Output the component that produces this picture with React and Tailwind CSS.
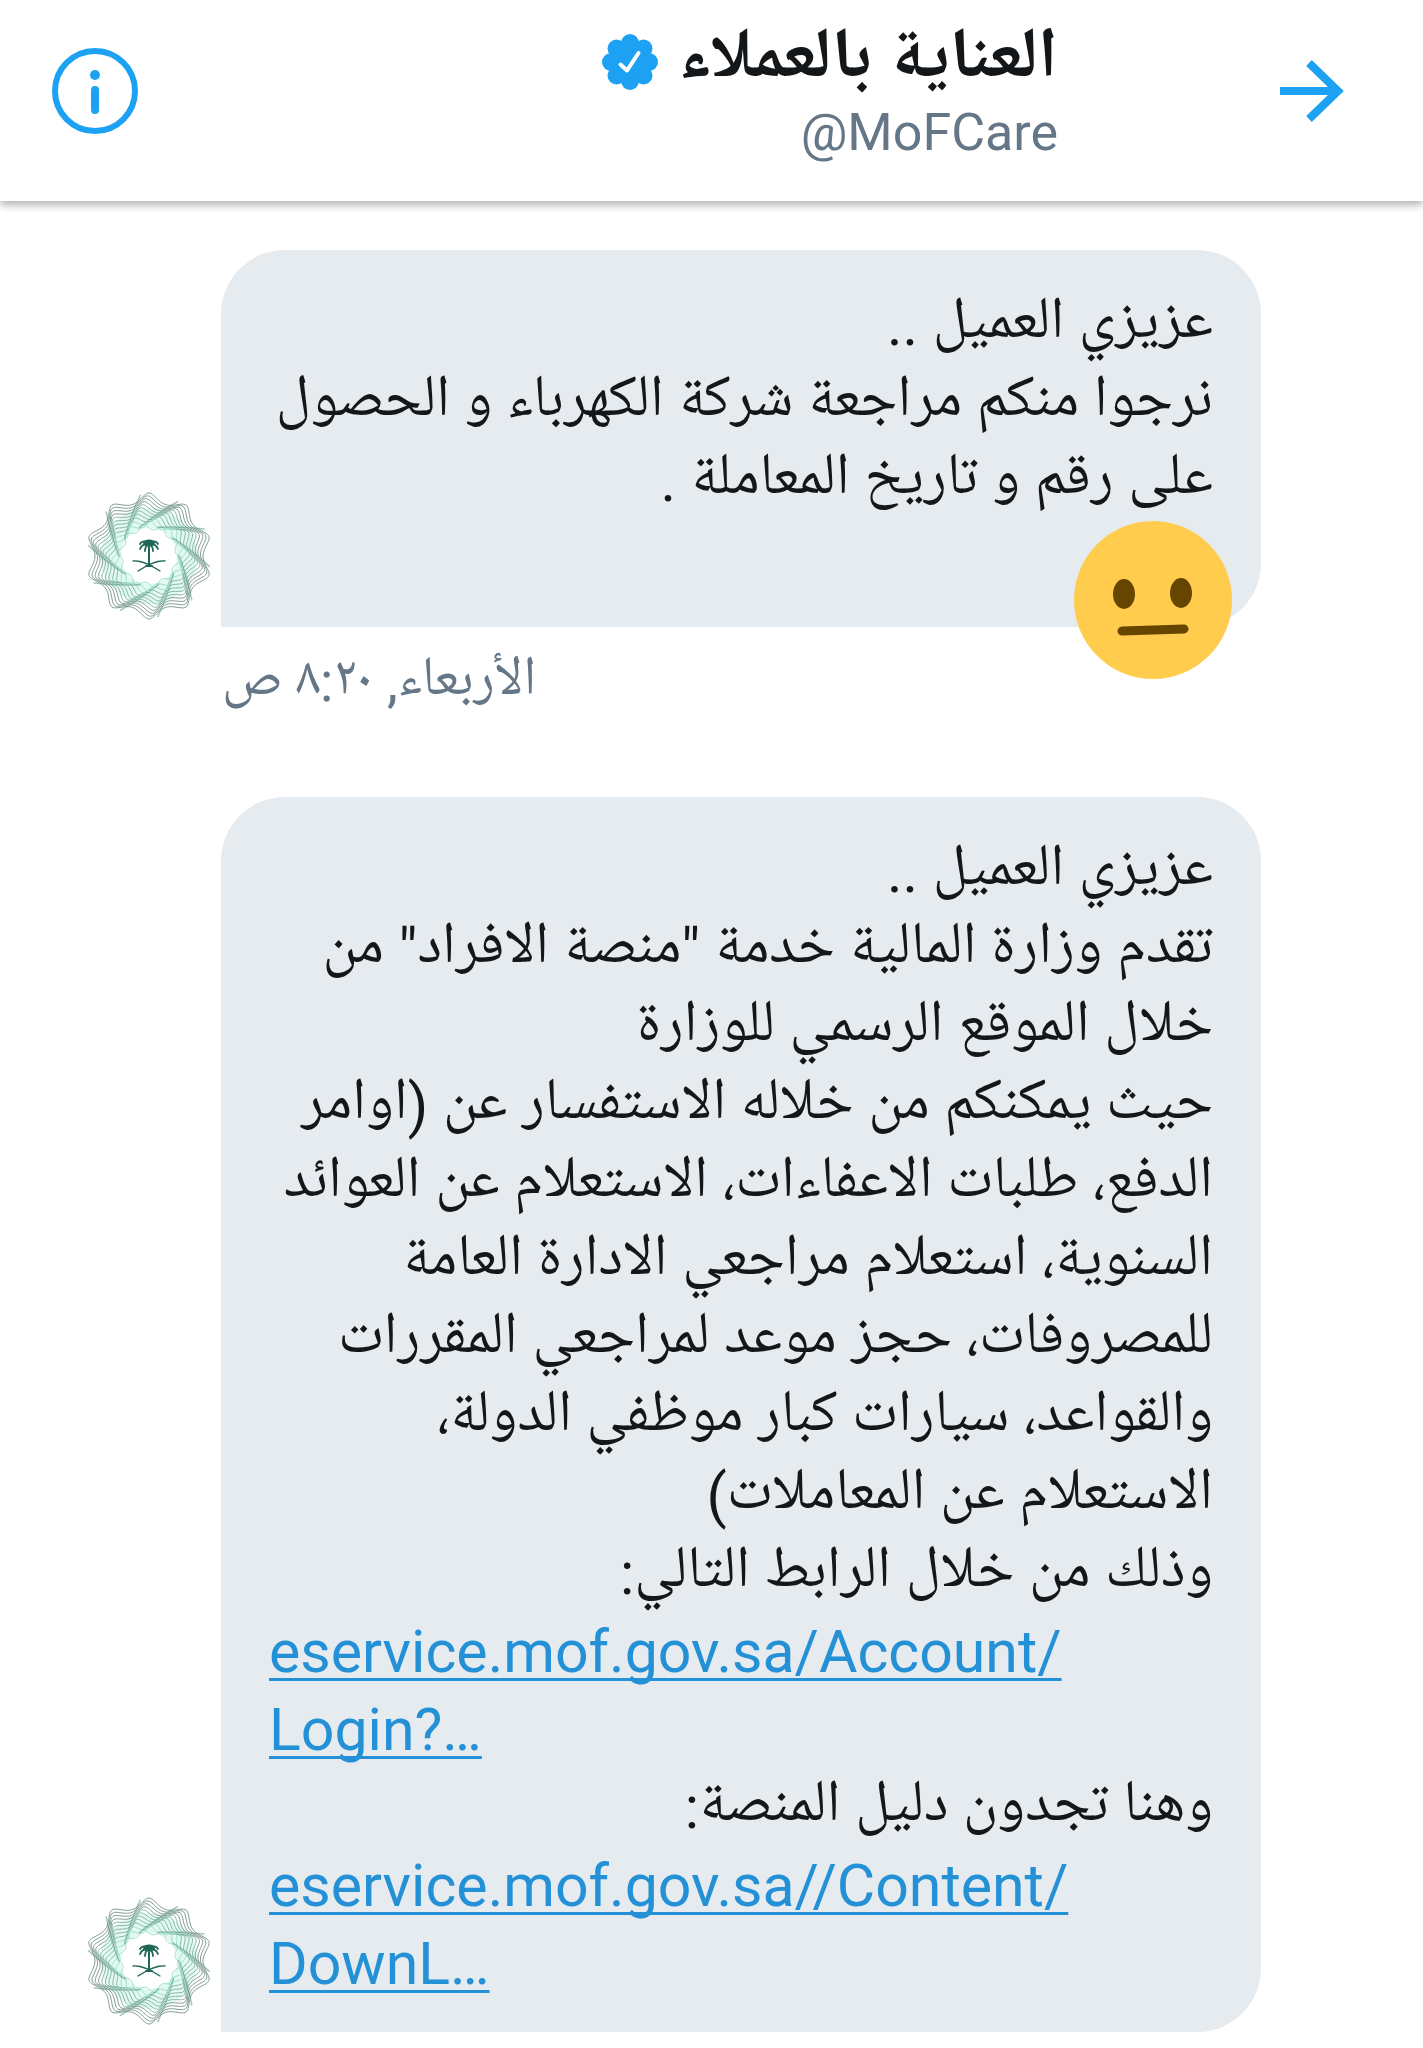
import React from 'react';

const CORE = 31;
const EDGE = 63;
const RINGS = 12;

// One ten-pointed ring of the guilloche rosette. Each smaller ring is turned a
// little further, so the points slide along lines that touch the core circle.
const ringPath = (radius) => {
  const turn = Math.acos(CORE / EDGE) - Math.acos(CORE / radius);
  const depth = 1 + 3.5 * (radius / EDGE);
  const points = [];
  for (let i = 0; i < 240; i += 1) {
    const t = (i / 240) * Math.PI * 2;
    const a = t - 0.03 * Math.sin(10 * t) - turn;
    const r = radius - depth + depth * Math.cos(10 * t);
    points.push(`${(r * Math.sin(a)).toFixed(2)} ${(-r * Math.cos(a)).toFixed(2)}`);
  }
  return `M${points.join('L')}Z`;
};

const rings = Array.from({ length: RINGS }, (_, i) =>
  ringPath(EDGE - (i * (EDGE - CORE - 1)) / (RINGS - 1))
);

const rays = [2, 38, 74, 110, 146, 182, 218, 254, 290, 326];

const Avatar = () => (
  <svg viewBox="-64 -64 128 128" className="w-32 h-32 shrink-0 mb-[7px]" role="img" aria-label="MoFCare">
    <circle r="38" fill="none" stroke="#e2f9f0" strokeWidth="20" />
    <g fill="none" strokeLinejoin="round" strokeWidth="1">
      {rings.map((d, i) => (
        <path key={d} d={d} stroke={i < 4 ? '#7f9a91' : i < 9 ? '#84b5a4' : '#9adfc8'} />
      ))}
    </g>
    <g fill="none" stroke="#4f8f7b" strokeWidth="1.5" strokeOpacity="0.5" strokeLinecap="round">
      {rays.map((angle) => (
        <path key={angle} d="M8 -29Q32 -31 54 -29" transform={`rotate(${angle})`} />
      ))}
    </g>
    <circle r="25" fill="#fff" />
    <g fill="none" stroke="#1f6655" strokeLinecap="round">
      <path d="M0 -9V9" strokeWidth="2" />
      <path d="M-1 -13C-5 -16 -8 -14 -9 -12M1 -13C5 -16 8 -14 9 -12M-1 -12C-5 -12 -8 -10 -9 -7M1 -12C5 -12 8 -10 9 -7M-1 -11C-3 -10 -4 -7 -4 -5M1 -11C3 -10 4 -7 4 -5" strokeWidth="1.8" />
      <path d="M-16 5C-8 4 0 8 11 15M16 5C8 4 0 8 -11 15" strokeWidth="1.3" />
      <path d="M-3 10H3" strokeWidth="2" />
    </g>
    <ellipse cy="-13" rx="6" ry="3.5" fill="#1f6655" />
  </svg>
);

const VerifiedBadge = () => (
  <svg viewBox="0 0 56 56" className="w-14 h-14 shrink-0" role="img" aria-label="Verified">
    <g fill="#1da1f2">
      <circle cx="28" cy="28" r="22" />
      <circle cx="28" cy="9" r="9" />
      <circle cx="41.5" cy="14.5" r="9" />
      <circle cx="47" cy="28" r="9" />
      <circle cx="41.5" cy="41.5" r="9" />
      <circle cx="28" cy="47" r="9" />
      <circle cx="14.5" cy="41.5" r="9" />
      <circle cx="9" cy="28" r="9" />
      <circle cx="14.5" cy="14.5" r="9" />
    </g>
    <path d="M18.5 30.5L25 36.5L36.5 19" fill="none" stroke="#fff" strokeWidth="4" strokeLinecap="round" strokeLinejoin="round" />
  </svg>
);

const NeutralFace = () => (
  <svg viewBox="0 0 158 158" className="w-[158px] h-[158px]" role="img" aria-label="Neutral face">
    <circle cx="79" cy="79" r="79" fill="#ffcc4d" />
    <g fill="#664500">
      <ellipse cx="50" cy="73" rx="11" ry="15" />
      <ellipse cx="107" cy="72" rx="11" ry="15" />
    </g>
    <path d="M48 110L110 108" stroke="#664500" strokeWidth="9" strokeLinecap="round" />
  </svg>
);

const Header = () => (
  <header className="flex items-start bg-white pr-[79px] pl-[52px] h-[201px] shadow-[0_4px_8px_rgba(0,0,0,0.3)]">
    <button type="button" aria-label="Back" className="mt-[60px]">
      <svg viewBox="0 0 64 64" className="w-16 h-16" fill="none" stroke="#1da1f2" strokeWidth="8">
        <path d="M0 31H58M29 3L58 31L29 59" />
      </svg>
    </button>
    <div className="flex-1 pr-[222px] pt-5">
      <div className="flex items-center gap-5">
        <h1 className="font-bold text-[71px] leading-[84px] text-[#14171a]">العناية بالعملاء</h1>
        <VerifiedBadge />
      </div>
      <p dir="ltr" className="text-right text-[52px] leading-[58px] text-[#657786]">@MoFCare</p>
    </div>
    <button type="button" aria-label="Conversation info" className="mt-12">
      <svg viewBox="0 0 86 86" className="w-[86px] h-[86px]">
        <circle cx="43" cy="43" r="40" fill="none" stroke="#1da1f2" strokeWidth="6" />
        <circle cx="43" cy="27" r="5" fill="#1da1f2" />
        <path d="M43 42V62" stroke="#1da1f2" strokeWidth="8" strokeLinecap="round" />
      </svg>
    </button>
  </header>
);

const MessageLink = ({ href, children }) => (
  <a
    dir="ltr"
    href={href}
    className="block text-left text-[#2490d6] underline decoration-[3px] underline-offset-[6px] [text-decoration-skip-ink:none]"
  >
    {children}
  </a>
);

const Message = ({ children, reaction }) => (
  <div className="flex items-end flex-row-reverse gap-2 pl-[85px] pr-[162px]">
    <Avatar />
    <div className="relative flex-1 rounded-[64px] rounded-bl-none bg-[#e6ebf0] px-12 pt-9 pb-[29px] text-[59px] leading-[78px] text-[#14171a]">
      {children}
      {reaction && <div className="absolute right-[29px] -bottom-[52px]">{reaction}</div>}
    </div>
  </div>
);

const App = () => {
  return (
    <div dir="rtl" className="min-h-screen bg-white pb-3 font-['Roboto','Noto_Naskh_Arabic_UI','Noto_Naskh_Arabic','Noto_Sans_Arabic','DejaVu_Sans',sans-serif]">
      <Header />
      <main className="pt-[49px]">
        <Message reaction={<NeutralFace />}>
          <p>عزيزي العميل ..</p>
          <p>
            نرجوا منكم مراجعة شركة الكهرباء و الحصول
            <br />
            على رقم و تاريخ المعاملة .
          </p>
          <br />
        </Message>
        <p className="pl-[222px] pt-5 pb-20 text-left text-[55px] leading-[70px] text-[#657786]">
          <time>الأربعاء, ٨:٢٠ ص</time>
        </p>
        <Message>
          <p>عزيزي العميل ..</p>
          <p>
            تقدم وزارة المالية خدمة "منصة الافراد" من
            <br />
            خلال الموقع الرسمي للوزارة
          </p>
          <p>
            حيث يمكنكم من خلاله الاستفسار عن (اوامر
            <br />
            الدفع، طلبات الاعفاءات، الاستعلام عن العوائد
            <br />
            السنوية، استعلام مراجعي الادارة العامة
            <br />
            للمصروفات، حجز موعد لمراجعي المقررات
            <br />
            والقواعد، سيارات كبار موظفي الدولة،
            <br />
            الاستعلام عن المعاملات)
          </p>
          <p>وذلك من خلال الرابط التالي:</p>
          <MessageLink href="#login">
            eservice.mof.gov.sa/Account/
            <br />
            Login?…
          </MessageLink>
          <p>وهنا تجدون دليل المنصة:</p>
          <MessageLink href="#guide">
            eservice.mof.gov.sa//Content/
            <br />
            DownL…
          </MessageLink>
        </Message>
      </main>
    </div>
  );
};

export default App;
